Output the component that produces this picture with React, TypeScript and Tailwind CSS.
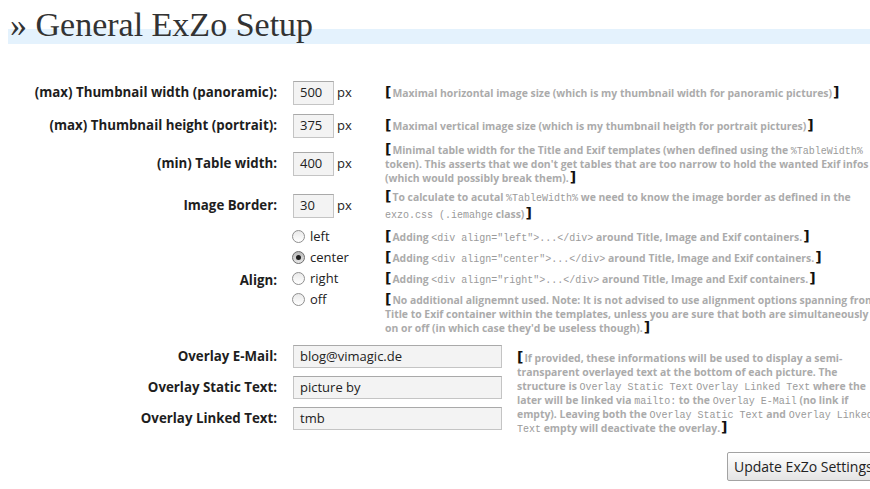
import React from "react";

const LABEL =
  "w-[277px] shrink-0 text-right font-['Open_Sans',sans-serif] font-bold text-[13.3px] text-[#1e1e1e] whitespace-nowrap";
const SANS = "font-['Open_Sans',sans-serif]";

function Desc({ children, className = "" }: { children: React.ReactNode; className?: string }) {
  return (
    <div
      className={`${SANS} text-[10.4px] font-bold text-[#ababab] leading-[14px] whitespace-nowrap ${className}`}
    >
      {children}
    </div>
  );
}

function O() {
  return (
    <span className="font-['DejaVu_Sans',sans-serif] font-bold text-[14px] text-[#111] leading-[10px] mr-[1px]">
      [
    </span>
  );
}
function C() {
  return (
    <span className="font-['DejaVu_Sans',sans-serif] font-bold text-[14px] text-[#111] leading-[10px] ml-[1px]">
      ]
    </span>
  );
}
function M({ children }: { children: React.ReactNode }) {
  return (
    <span className="font-['Liberation_Mono',monospace] font-normal text-[10px] leading-[8px] text-[#9a9a9a]">
      {children}
    </span>
  );
}

function Radio({ checked = false }: { checked?: boolean }) {
  return (
    <span
      className={`w-[13px] h-[13px] shrink-0 rounded-full border flex items-center justify-center ${
        checked
          ? "border-[#6d6d6d] bg-[linear-gradient(to_bottom,#b9b9b9,#e6e6e6)]"
          : "border-[#8f8f8f] bg-[linear-gradient(to_bottom,#e9e9e9,#ffffff)]"
      }`}
    >
      {checked && <span className="w-[5px] h-[5px] rounded-full bg-[#1e1e1e]" />}
    </span>
  );
}

function NumRow({
  label,
  value,
  h,
  children,
}: {
  label: string;
  value: string;
  h: string;
  children: React.ReactNode;
}) {
  return (
    <div className={`flex items-center ${h}`}>
      <div className={LABEL}>{label}</div>
      <div className={`w-[108px] shrink-0 pl-[16px] flex items-center ${SANS} text-[13px] text-[#222]`}>
        <div className="w-[41px] h-[24px] border border-[#c4c4c4] border-t-[#a9a9a9] bg-[#f3f3f3] pl-[6px] flex items-center">
          {value}
        </div>
        <span className="ml-[3px]">px</span>
      </div>
      <Desc>{children}</Desc>
    </div>
  );
}

function RadioRow({ label, checked, children }: { label: string; checked?: boolean; children: React.ReactNode }) {
  return (
    <div className="flex items-center h-[21px]">
      <div className={`w-[108px] shrink-0 pl-[15px] flex items-center ${SANS} text-[13px] text-[#222]`}>
        <Radio checked={checked} />
        <span className="ml-[5px]">{label}</span>
      </div>
      <Desc>{children}</Desc>
    </div>
  );
}

function TextRow({ label, value }: { label: string; value: string }) {
  return (
    <div className="flex items-center h-[31px]">
      <div className={LABEL}>{label}</div>
      <div
        className={`ml-[16px] w-[209px] h-[23px] border border-[#c4c4c4] border-t-[#a9a9a9] bg-[#f3f3f3] pl-[6px] flex items-center ${SANS} text-[13px] text-[#222]`}
      >
        {value}
      </div>
    </div>
  );
}

export default function App() {
  return (
    <div className="w-[870px] h-[489px] overflow-hidden bg-white">
      <div className="pl-[8px] pt-[8px]">
        <h2 className="h-[36px] pl-[2px] font-['Liberation_Serif',serif] text-[34px] leading-[34px] text-[#333] bg-[linear-gradient(to_bottom,transparent_21px,#e4f2fd_21px)] whitespace-nowrap">
          » General ExZo Setup
        </h2>
      </div>

      <div className="mt-[32px]">
        <NumRow label="(max) Thumbnail width (panoramic):" value="500" h="h-[33px]">
          <O />
          Maximal horizontal image size (which is my thumbnail width for panoramic pictures)
          <C />
        </NumRow>
        <NumRow label="(max) Thumbnail height (portrait):" value="375" h="h-[33px]">
          <O />
          Maximal vertical image size (which is my thumbnail heigth for portrait pictures)
          <C />
        </NumRow>
        <NumRow label="(min) Table width:" value="400" h="h-[43px]">
          <O />
          Minimal table width for the Title and Exif templates (when defined using the <M>%TableWidth%</M>
          <br />
          token). This asserts that we don't get tables that are too narrow to hold the wanted Exif infos
          <br />
          (which would possibly break them).
          <C />
        </NumRow>
        <NumRow label="Image Border:" value="30" h="h-[41px]">
          <div className="leading-[17px]">
            <O />
            To calculate to acutal <M>%TableWidth%</M> we need to know the image border as defined in the
            <br />
            <M>exzo.css (.iemahge</M> class)
            <C />
          </div>
        </NumRow>

        <div className="flex">
          <div className={`${LABEL} self-center`}>Align:</div>
          <div className="flex flex-col">
            <RadioRow label="left">
              <O />
              Adding <M>&lt;div align="left"&gt;...&lt;/div&gt;</M> around Title, Image and Exif containers.
              <C />
            </RadioRow>
            <RadioRow label="center" checked>
              <O />
              Adding <M>&lt;div align="center"&gt;...&lt;/div&gt;</M> around Title, Image and Exif containers.
              <C />
            </RadioRow>
            <RadioRow label="right">
              <O />
              Adding <M>&lt;div align="right"&gt;...&lt;/div&gt;</M> around Title, Image and Exif containers.
              <C />
            </RadioRow>
            <div className="flex items-start">
              <div className={`w-[108px] shrink-0 pl-[15px] h-[21px] flex items-center ${SANS} text-[13px] text-[#222]`}>
                <Radio />
                <span className="ml-[5px]">off</span>
              </div>
              <Desc className="pt-[4px]">
                <O />
                No additional alignemnt used. Note: It is not advised to use alignment options spanning from
                <br />
                Title to Exif container within the templates, unless you are sure that both are simultaneously
                <br />
                on or off (in which case they'd be useless though).
                <C />
              </Desc>
            </div>
          </div>
        </div>

        <div className="flex mt-[6px]">
          <div className="flex flex-col">
            <TextRow label="Overlay E-Mail:" value="blog@vimagic.de" />
            <TextRow label="Overlay Static Text:" value="picture by" />
            <TextRow label="Overlay Linked Text:" value="tmb" />
          </div>
          <Desc className="ml-[15px] pt-[10px] leading-[13.3px]">
            <O />
            If provided, these informations will be used to display a semi-
            <br />
            transparent overlayed text at the bottom of each picture. The
            <br />
            structure is <M>Overlay Static Text</M> <M>Overlay Linked Text</M> where the
            <br />
            later will be linked via <M>mailto:</M> to the <M>Overlay E-Mail</M> (no link if
            <br />
            empty). Leaving both the <M>Overlay Static Text</M> and <M>Overlay Linked</M>
            <br />
            <M>Text</M> empty will deactivate the overlay.
            <C />
          </Desc>
        </div>

        <div className="pl-[727px] mt-[17px]">
          <button
            className={`h-[29px] px-[6px] border border-[#a3a3a3] rounded-[2px] bg-[linear-gradient(to_bottom,#ffffff,#e4e4e4)] whitespace-nowrap ${SANS} text-[14px] text-[#222]`}
          >
            Update ExZo Settings »
          </button>
        </div>
      </div>
    </div>
  );
}
